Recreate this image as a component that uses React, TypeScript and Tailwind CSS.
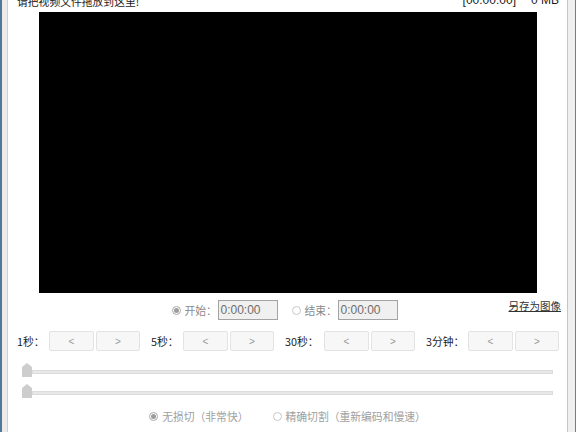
import React from 'react'

const cjk = { fontFamily: '"Microsoft YaHei", "Noto Sans CJK SC", sans-serif' }
const latin = { fontFamily: '"Liberation Sans", Arial, sans-serif' }

const Radio: React.FC<{ checked?: boolean }> = ({ checked }) => (
  <span
    className={`flex h-[9px] w-[9px] items-center justify-center rounded-full border bg-white ${
      checked ? 'border-[#a8a8a8]' : 'border-[#c8c8c8]'
    }`}
  >
    {checked && <span className="h-[5px] w-[5px] rounded-full bg-[#9c9c9c]" />}
  </span>
)

const TimeBox: React.FC = () => (
  <div
    className="flex h-[20px] w-[60px] items-center border border-[#a3a3a3] bg-[#f0f0f0] pl-[2px] text-[12px] text-[#6d6d6d]"
    style={latin}
  >
    0:00:00
  </div>
)

const StepGroup: React.FC<{ label: string; labelWidth: string }> = ({ label, labelWidth }) => (
  <div className="flex items-center">
    <span className={`${labelWidth} text-[10.8px] text-[#1a1a1a]`} style={cjk}>
      {label}
    </span>
    <div className="flex gap-[2px]">
      <button className="flex h-[20px] w-[45px] items-center justify-center rounded-[2px] border border-[#e3e3e3] bg-[#f7f7f7] text-[10px] text-[#9a9a9a]" style={latin}>
        &lt;
      </button>
      <button className="flex h-[20px] w-[44px] items-center justify-center rounded-[2px] border border-[#e3e3e3] bg-[#f7f7f7] text-[10px] text-[#9a9a9a]" style={latin}>
        &gt;
      </button>
    </div>
  </div>
)

const Slider: React.FC = () => (
  <div className="flex h-[14px] items-end pl-[14px] pr-[14px]">
    <svg width="10" height="14" viewBox="0 0 10 14" className="shrink-0">
      <polygon points="5,0 10,4 10,14 0,14 0,4" fill="#cdcdcd" />
    </svg>
    <div className="mb-[3px] h-[4px] flex-1 border border-[#dcdcdc] bg-[#e8e8e8]" />
  </div>
)

export default function App() {
  return (
    <div className="flex h-[432px] w-[576px] overflow-hidden bg-white">
      <div className="w-[2px] bg-[#4f7797]" />
      <div className="w-[5px] bg-[#ebebeb]" />
      <div className="w-[1px] bg-[#cfcfcf]" />

      <div className="flex w-[559px] flex-col">
        <div className="flex h-[12px] items-start justify-between overflow-hidden pl-[9px] pr-[8px]">
          <span className="-mt-[5px] text-[10.8px] leading-[12px] text-[#1a1a1a]" style={cjk}>
            请把视频文件拖放到这里!
          </span>
          <span className="-mt-[6px] flex gap-[15px] text-[12px] leading-[12px] text-[#1a1a1a]" style={latin}>
            <span>[00:00:00]</span>
            <span>0 MB</span>
          </span>
        </div>

        <div className="mx-auto h-[281px] w-[498px] bg-black" />

        <div className="mt-[7px] grid h-[20px] grid-cols-[1fr_auto_1fr] items-center pr-[6px]">
          <div />
          <div className="flex items-center">
            <Radio checked />
            <span className="ml-[4px] w-[33px] text-[10.8px] text-[#8a8a8a]" style={cjk}>
              开始：
            </span>
            <TimeBox />
            <span className="ml-[14px]">
              <Radio />
            </span>
            <span className="ml-[4px] w-[33px] text-[10.8px] text-[#8a8a8a]" style={cjk}>
              结束：
            </span>
            <TimeBox />
          </div>
          <div className="flex justify-end">
            <span className="-mt-[8px] text-[10.5px] text-[#333] underline" style={cjk}>
              另存为图像
            </span>
          </div>
        </div>

        <div className="mt-[11px] flex items-center gap-[11px] pl-[9px]">
          <StepGroup label="1秒：" labelWidth="w-[32px]" />
          <StepGroup label="5秒：" labelWidth="w-[32px]" />
          <StepGroup label="30秒：" labelWidth="w-[39px]" />
          <StepGroup label="3分钟：" labelWidth="w-[42px]" />
        </div>

        <div className="mt-[12px]">
          <Slider />
        </div>
        <div className="mt-[7px]">
          <Slider />
        </div>

        <div className="mt-[10px] flex items-center justify-center gap-[4px] text-[10.8px] text-[#a0a0a0]" style={cjk}>
          <Radio checked />
          <span className="mr-[20px]">无损切（非常快）</span>
          <Radio />
          <span>精确切割（重新编码和慢速）</span>
        </div>
      </div>

      <div className="w-[1px] bg-[#c6c6c6]" />
      <div className="w-[7px] bg-[#efefef]" />
      <div className="w-[1px] bg-[#5d84a6]" />
    </div>
  )
}
